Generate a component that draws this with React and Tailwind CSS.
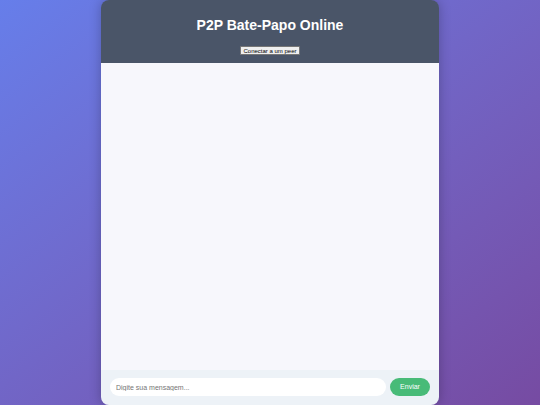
import React, { useState } from "react";

export default function App() {
    const [message, setMessage] = useState("");

    return (
        <div
            className="w-[540px] h-[405px] overflow-hidden bg-gradient-to-br from-[#667eea] to-[#764ba2] flex justify-center"
            style={{ fontFamily: '"Liberation Sans", Arial, sans-serif' }}
        >
            <div className="w-[338px] h-[405px] flex flex-col rounded-lg overflow-hidden shadow-[0_0_12px_rgba(0,0,0,0.25)]">
                <div className="h-[63px] bg-[#4a5568] flex flex-col items-center">
                    <h1 className="mt-[17px] text-[14px] leading-[16px] font-bold text-white">
                        P2P Bate-Papo Online
                    </h1>
                    <button className="mt-[13px] h-[9px] px-[2px] bg-[#efefef] border border-[#767676] rounded-[1px] text-[6px] leading-[6px] text-black">
                        Conectar a um peer
                    </button>
                </div>

                <div className="flex-1 bg-[#f7f7fc]"></div>

                <div className="h-[35px] bg-[#edf2f7] flex items-center gap-[4px] px-[9px] pb-[1px]">
                    <input
                        type="text"
                        value={message}
                        onChange={(e) => setMessage(e.target.value)}
                        placeholder="Digite sua mensagem..."
                        className="flex-1 h-[18px] rounded-full bg-white px-[6px] text-[7px] text-gray-700 placeholder:text-[#757575] outline-none"
                    />
                    <button className="w-[40px] h-[18px] rounded-full bg-[#48bb78] text-white text-[7px]">
                        Enviar
                    </button>
                </div>
            </div>
        </div>
    );
}
